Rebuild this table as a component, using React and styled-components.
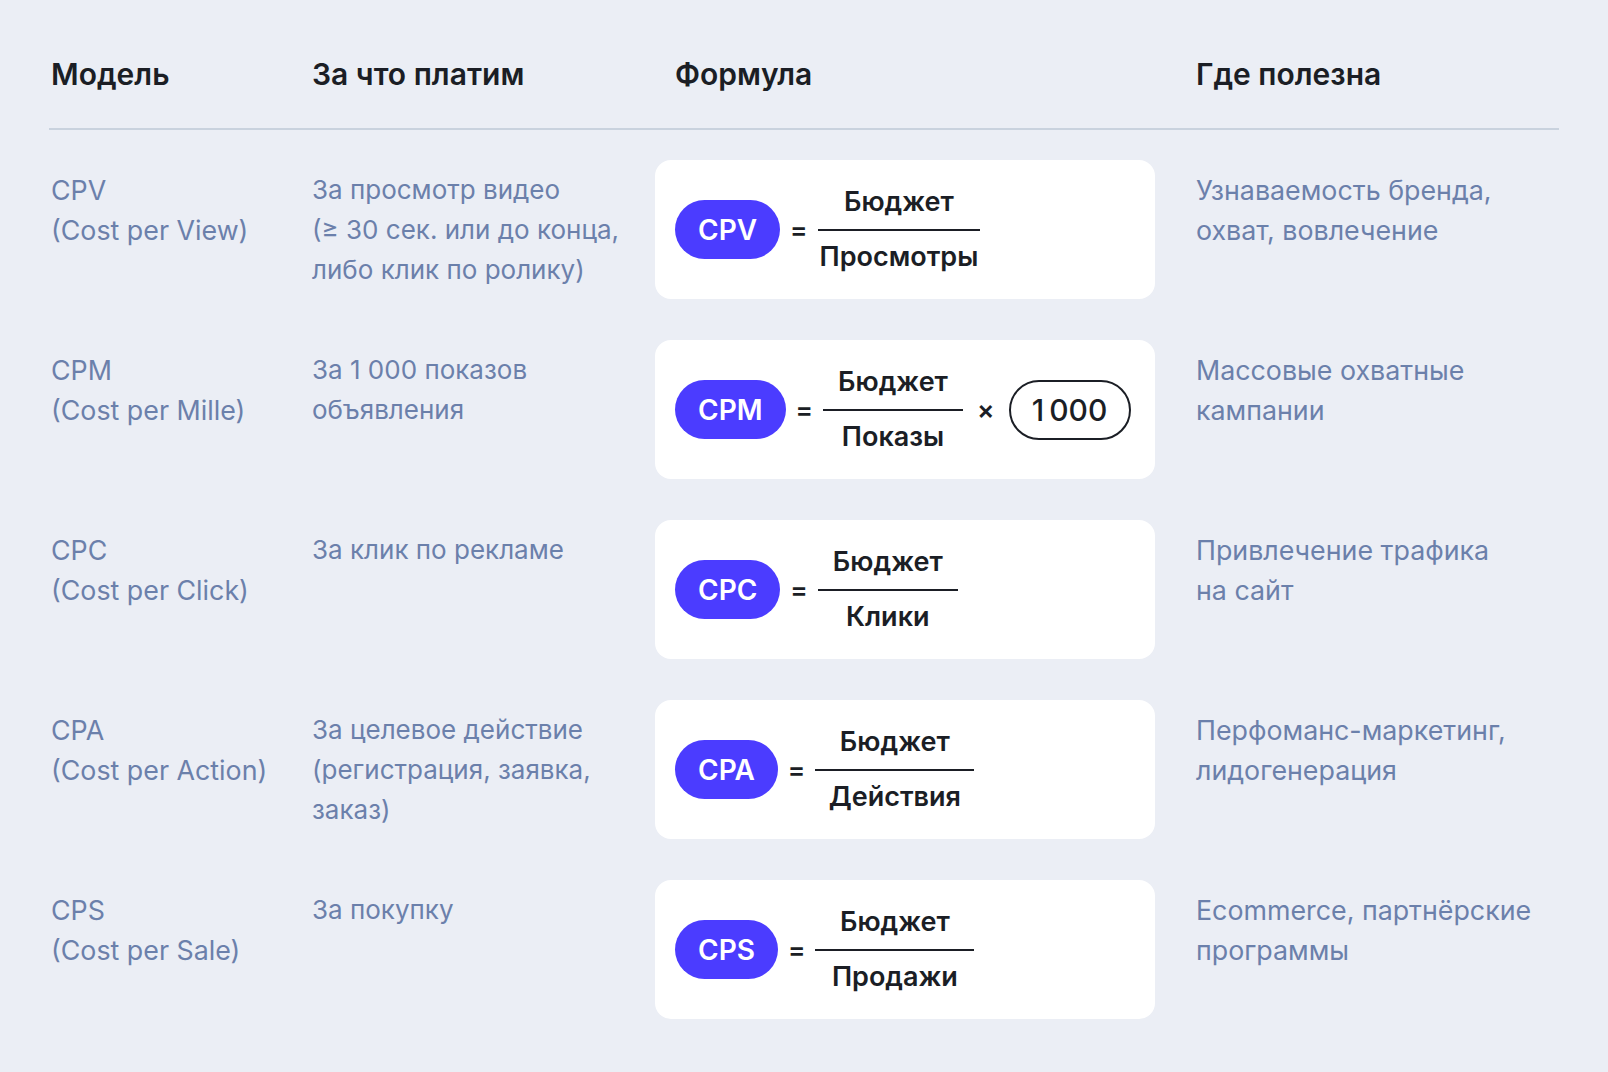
import React from 'react';
import styled, { createGlobalStyle } from 'styled-components';

const GlobalStyle = createGlobalStyle`
  html, body {
    margin: 0;
    padding: 0;
    background: #ebeef5;
  }
  body {
    font-family: Inter, "Noto Sans", sans-serif;
  }
`;

const Page = styled.div`
  width: 1608px;
  height: 1072px;
  box-sizing: border-box;
  padding: 56px 49px 0 49px;
  background: #ebeef5;
`;

const Grid = styled.div`
  display: grid;
  grid-template-columns: 261px 343px 541px 1fr;
  padding-left: 2px;
`;

const Header = styled(Grid)`
  padding-bottom: 36px;
  border-bottom: 2px solid #c9d2de;
`;

const HeadCell = styled.div`
  font-size: 30px;
  line-height: 36px;
  font-weight: 600;
  color: #1b1e25;
  padding-left: ${p => (p.$formula ? '20px' : '0')};
`;

const Body = styled.div`
  display: flex;
  flex-direction: column;
  gap: 41px;
  padding-top: 30px;
`;

const Row = styled(Grid)``;

const Cell = styled.div`
  font-size: ${p => p.$size || 26}px;
  line-height: 40px;
  color: #6b80ab;
  padding-top: 10px;
  white-space: nowrap;
`;

const Card = styled.div`
  width: 500px;
  height: 139px;
  box-sizing: border-box;
  background: #fff;
  border-radius: 16px;
  display: flex;
  align-items: center;
  padding-left: 20px;
`;

const Pill = styled.div`
  height: 59px;
  padding: 0 23px;
  border-radius: 30px;
  background: #4b3cff;
  color: #fff;
  font-size: 28px;
  font-weight: 600;
  display: flex;
  align-items: center;
  justify-content: center;
`;

const Op = styled.span`
  font-size: 26px;
  font-weight: 600;
  color: #1b1e25;
  margin: 0 ${p => (p.$wide ? '14px' : '10px')};
`;

const Fraction = styled.div`
  display: flex;
  flex-direction: column;
  align-items: center;
  min-width: ${p => p.$width}px;
`;

const Term = styled.div`
  font-size: 27px;
  line-height: 32px;
  font-weight: 600;
  color: #1b1e25;
  padding: 0 2px;
`;

const Bar = styled.div`
  align-self: stretch;
  height: 2px;
  background: #1b1e25;
  margin: 11px 0 10px;
`;

const Multiplier = styled.div`
  width: 122px;
  height: 60px;
  box-sizing: border-box;
  border: 2px solid #1b1e25;
  border-radius: 30px;
  display: flex;
  align-items: center;
  justify-content: center;
  gap: 5px;
  font-size: 30px;
  font-weight: 500;
  color: #1b1e25;
`;

const rows = [
  {
    model: ['CPV', '(Cost per View)'],
    pay: ['За просмотр видео', '(≥ 30 сек. или до конца,', 'либо клик по ролику)'],
    pill: 'CPV',
    bottom: 'Просмотры',
    bar: 160,
    use: ['Узнаваемость бренда,', 'охват, вовлечение'],
  },
  {
    model: ['CPM', '(Cost per Mille)'],
    pay: ['За 1 000 показов', 'объявления'],
    pill: 'CPM',
    bottom: 'Показы',
    bar: 140,
    times: ['1', '000'],
    use: ['Массовые охватные', 'кампании'],
  },
  {
    model: ['CPC', '(Cost per Click)'],
    pay: ['За клик по рекламе'],
    pill: 'CPC',
    bottom: 'Клики',
    bar: 140,
    use: ['Привлечение трафика', 'на сайт'],
  },
  {
    model: ['CPA', '(Cost per Action)'],
    pay: ['За целевое действие', '(регистрация, заявка,', 'заказ)'],
    pill: 'CPA',
    bottom: 'Действия',
    bar: 159,
    use: ['Перфоманс-маркетинг,', 'лидогенерация'],
  },
  {
    model: ['CPS', '(Cost per Sale)'],
    pay: ['За покупку'],
    pill: 'CPS',
    bottom: 'Продажи',
    bar: 159,
    use: ['Ecommerce, партнёрские', 'программы'],
  },
];

function Lines({ items }) {
  return items.map((t, i) => <div key={i}>{t}</div>);
}

function App() {
  return (
    <>
      <GlobalStyle />
      <Page>
        <Header>
          <HeadCell>Модель</HeadCell>
          <HeadCell>За что платим</HeadCell>
          <HeadCell $formula>Формула</HeadCell>
          <HeadCell>Где полезна</HeadCell>
        </Header>
        <Body>
          {rows.map(r => (
            <Row key={r.pill}>
              <Cell $size={26.8}><Lines items={r.model} /></Cell>
              <Cell><Lines items={r.pay} /></Cell>
              <Card>
                <Pill>{r.pill}</Pill>
                <Op>=</Op>
                <Fraction $width={r.bar}>
                  <Term>Бюджет</Term>
                  <Bar />
                  <Term>{r.bottom}</Term>
                </Fraction>
                {r.times && (
                  <>
                    <Op $wide>×</Op>
                    <Multiplier>
                      <span>{r.times[0]}</span>
                      <span>{r.times[1]}</span>
                    </Multiplier>
                  </>
                )}
              </Card>
              <Cell $size={26.8}><Lines items={r.use} /></Cell>
            </Row>
          ))}
        </Body>
      </Page>
    </>
  );
}

export default App;
